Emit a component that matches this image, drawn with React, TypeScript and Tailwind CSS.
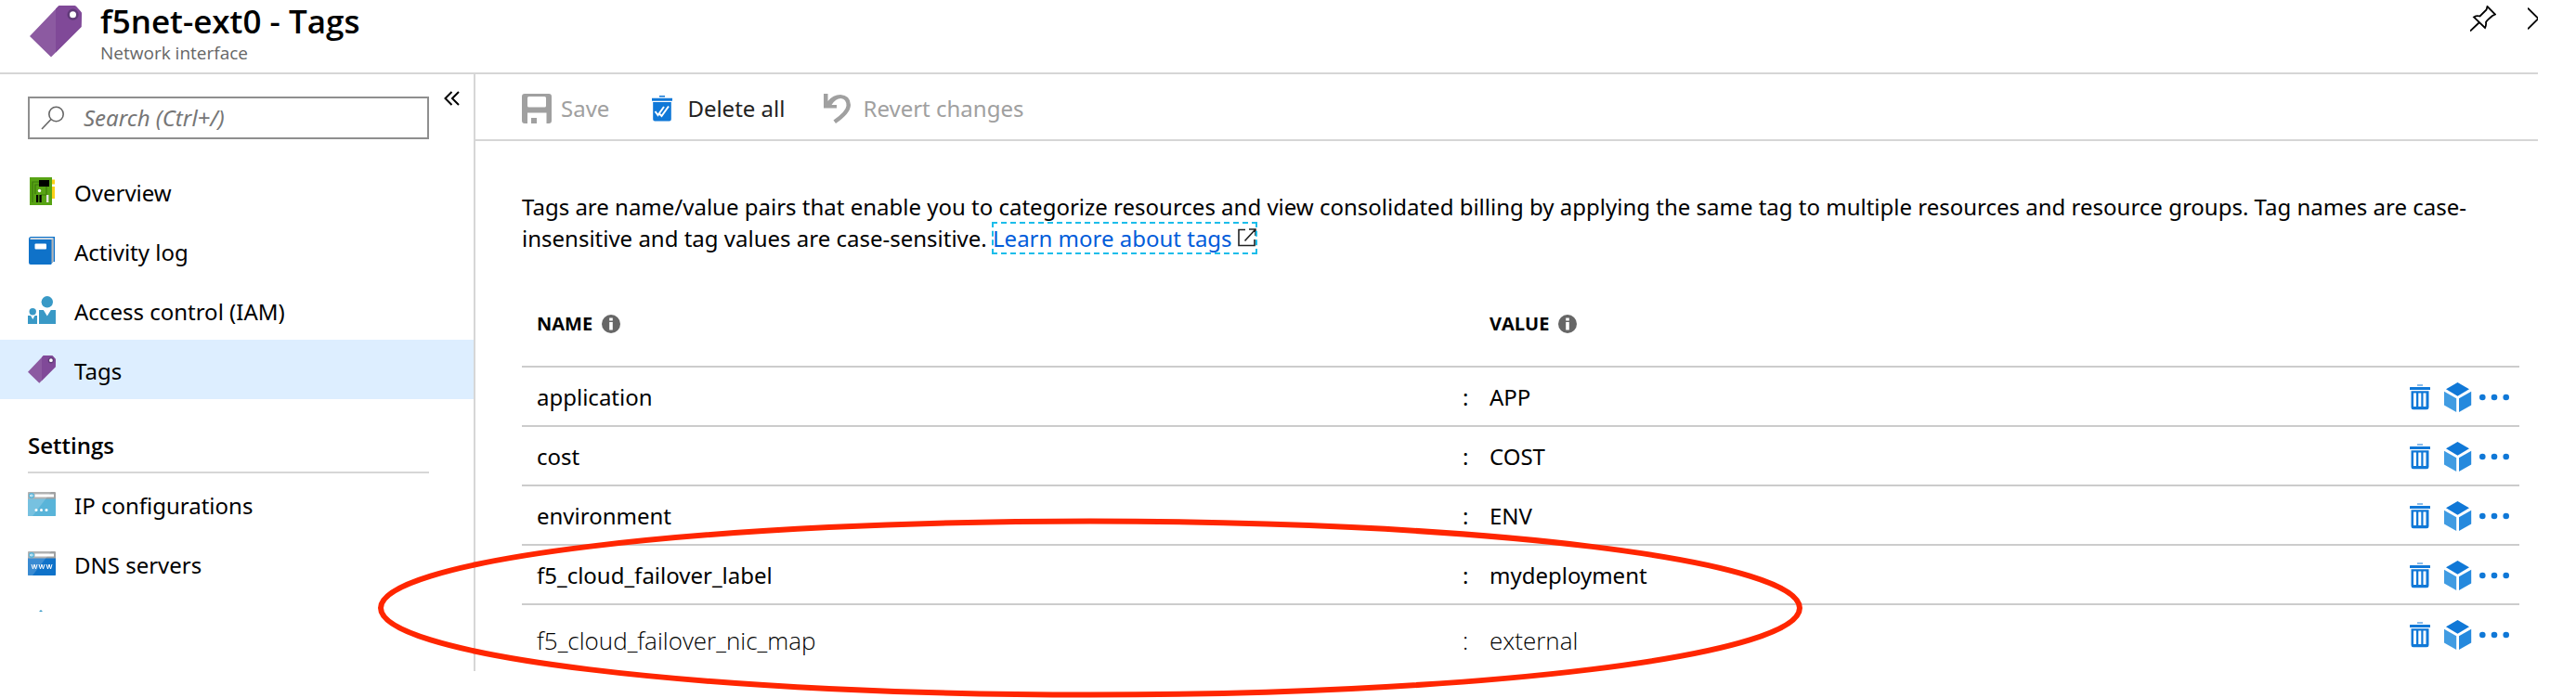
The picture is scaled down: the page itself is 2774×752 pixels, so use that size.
import React from "react";

function TagIcon({ className }: { className: string }) {
  return (
    <svg viewBox="0 0 56 56" className={className} aria-hidden="true">
      <path d="M0 33 31 .5Q31.500 0 32.500 0H47.500Q49 0 50 1L55 6.500Q56 7.500 56 9L55.500 23 23 55.500Z" fill="#8c5aa1" />
      <path d="M28 3.600 31 .5Q31.500 0 32.500 0H47.500Q49 0 50 1L55 6.500Q56 7.500 56 9L55.500 23 28 50.500Z" fill="#804998" />
      <circle cx="46.500" cy="9.700" r="4.800" fill="#fff" stroke="#603a78" strokeWidth="2.600" />
    </svg>
  );
}

function BoardIcon() {
  return (
    <svg viewBox="0 0 30 30" className="h-[30px] w-[30px]" aria-hidden="true">
      <path d="M26 2.500h3v5h-3zM26 10h3v13h-3z" fill="#fcd116" />
      <path d="M2 0h24v30H2z" fill="#57a314" />
      <path d="M12 5H5v22M12 8H8v10M20 10v9h-6" fill="none" stroke="#3d7a0d" strokeWidth="1.200" />
      <path d="M12 3h11v7H12zM9 19h2.200v8H9zM12.500 19h2.200v8h-2.200z" fill="#000" />
      <path d="M20 19h2.400v8H20z" fill="#e5e5e5" />
      <circle cx="12.500" cy="14.500" r="1.700" fill="#fff" />
    </svg>
  );
}

function BookIcon() {
  return (
    <svg viewBox="0 0 30 30" className="h-[30px] w-[30px]" aria-hidden="true">
      <path d="M3.500 0H29v27h-2l-2 3H3Q1 30 1 28V2.500Q1 0 3.500 0Z" fill="#0f72c9" />
      <path d="M3.500 1.200H27.500v25.500H26V3H3Q2 2.500 2.300 2 2.700 1.200 3.500 1.200Z" fill="#e6e6e6" />
      <path d="M26 2.500h1.300v24L25.500 29V3Z" fill="#b3b3b3" />
      <rect x="7.500" y="7.500" width="12.500" height="6" rx="1" fill="#fff" />
    </svg>
  );
}

function PeopleIcon() {
  return (
    <svg viewBox="0 0 30 30" className="h-[30px] w-[30px]" aria-hidden="true">
      <g fill="#3999c6">
        <circle cx="20.800" cy="6.300" r="6.200" />
        <path d="M12 15h4.800l4 6.500L24.800 15H30v15H12z" />
        <circle cx="5.200" cy="16.700" r="3.700" />
        <path d="M0 21h3l2.300 4L7.500 21H10v9H0z" />
      </g>
    </svg>
  );
}

function WindowIcon({ dns = false }: { dns?: boolean }) {
  return (
    <svg viewBox="0 0 30 26" className="h-[26px] w-[30px]" aria-hidden="true">
      <rect width="30" height="26" rx="1" fill="#a0a1a2" />
      <path d="M0 7.500h30V25q0 1-1 1H1q-1 0-1-1z" fill={dns ? "#0f72c9" : "#59b4d9"} />
      <path d="M1 0h24L5 26H1q-1 0-1-1V1q0-1 1-1z" fill="#fff" opacity=".18" />
      <path d="M7.500 2.500H28v3H7.500z" fill="#fff" />
      <circle cx="4" cy="4" r="3" fill="#59b4d9" />
      <path d="M6 4H2.500M4 2.500 2.500 4 4 5.500" fill="none" stroke="#fff" strokeWidth=".9" />
      {dns ? (
        <path
          d="m3 14 1.500 5 1.500-5 1.500 5L9 14M11 14l1.500 5 1.500-5 1.500 5 1.500-5M19 14l1.500 5 1.500-5 1.500 5 1.500-5"
          transform="translate(1 0)"
          fill="none"
          stroke="#fff"
          strokeWidth="1"
        />
      ) : (
        <g fill="#fff">
          <circle cx="9" cy="19.500" r="1.500" />
          <circle cx="14.500" cy="19.500" r="1.500" />
          <circle cx="20" cy="19.500" r="1.500" />
        </g>
      )}
    </svg>
  );
}

function SearchIcon() {
  return (
    <svg viewBox="0 0 26 26" className="h-[26px] w-[26px] shrink-0" aria-hidden="true">
      <g fill="none" stroke="#666" strokeWidth="1.600">
        <circle cx="16.500" cy="9" r="7.700" />
        <path d="M11 14.500 1 25" />
      </g>
    </svg>
  );
}

function SaveIcon() {
  return (
    <svg viewBox="0 0 32 32" className="h-8 w-8" aria-hidden="true">
      <path
        fillRule="evenodd"
        fill="#a0a0a0"
        d="M3 0h26q3 0 3 3v26q0 3-3 3h-2.500V20.500H6V32H3q-3 0-3-3V3q0-3 3-3Zm3 4.500V13q0 1.500 1.500 1.500h17Q26 14.500 26 13V4.500Q26 3 24.500 3h-17Q6 3 6 4.500ZM10 26h6v6h-6z"
      />
    </svg>
  );
}

function DeleteAllIcon() {
  return (
    <svg viewBox="0 0 22 28" className="h-7 w-[22px]" aria-hidden="true">
      <path d="M8 0h6v1.600H8zM0 2.800h22v3H0zM1.200 7h19.600v18.500q0 2-2 2H3.200q-2 0-2-2z" fill="#1078d7" />
      <path d="m3.500 17 3 4 6.500-9M8 19.500l2.500 2.500L18 11.500" fill="none" stroke="#fff" strokeWidth="2" />
    </svg>
  );
}

function RevertIcon() {
  return (
    <svg viewBox="0 0 30 32" className="h-8 w-[30px]" aria-hidden="true">
      <path d="M0 0V15.500H14V12H8.500Q13 5 18.500 5 24.500 5.500 24.500 13 24 19 10.500 28.500L13 32Q29 21 29 12 28.500 1.500 18 1 10 1 4.500 8V0Z" fill="#a0a0a0" />
    </svg>
  );
}

function PinIcon() {
  return (
    <svg viewBox="0 0 28 28" className="h-7 w-7" aria-hidden="true">
      <path
        d="M18.500 1 27 9.500 24 11Q18 16 17 18 17.500 21 16 24L4 12.500Q7 10.500 10.500 11.500L17.500 4.500ZM10 18 0 27.500"
        fill="none"
        stroke="#000"
        strokeWidth="1.800"
      />
    </svg>
  );
}

function InfoIcon() {
  return (
    <svg viewBox="0 0 20 20" className="h-5 w-5" aria-hidden="true">
      <circle cx="10" cy="10" r="10" fill="#666" />
      <path d="M8.200 3.500h3.600v3H8.200zM8.200 8h3.600v8.500H8.200z" fill="#fff" />
    </svg>
  );
}

function TrashIcon() {
  return (
    <svg viewBox="0 0 22 28" className="h-7 w-[22px]" aria-hidden="true">
      <path
        fillRule="evenodd"
        fill="#1078d7"
        d="M8 .4h6v1.200H8zM.5 3h21q.5 0 .5.500V6H0V3.500Q0 3 .5 3ZM1.500 7.200h19V25q0 2.300-2.300 2.300H3.800Q1.500 27.300 1.500 25ZM4 9.500v14.500h3V9.500Zm5.300 0v14.500h3V9.500Zm5.200 0v14.500h3V9.500Z"
      />
    </svg>
  );
}

function CubeIcon() {
  return (
    <svg viewBox="0 0 30 32" className="h-8 w-[30px]" aria-hidden="true">
      <path d="M14.500 0 27 7.300 14.500 14.800 2 7.300Z" fill="#1078d7" />
      <path d="M0 9.800 13.200 17.300V32L0 24.500Z" fill="#419ce2" />
      <path d="M29.200 9.800 16 17.300V32l13.200-7.500Z" fill="#2589dd" />
    </svg>
  );
}

function DotsIcon() {
  return (
    <svg viewBox="0 0 32 8" className="h-2 w-8" aria-hidden="true">
      <g fill="#1078d7">
        <circle cx="3.300" cy="4" r="3.300" />
        <circle cx="16" cy="4" r="3.300" />
        <circle cx="28.700" cy="4" r="3.300" />
      </g>
    </svg>
  );
}

const mainNav = [
  { label: "Overview", icon: <BoardIcon /> },
  { label: "Activity log", icon: <BookIcon /> },
  { label: "Access control (IAM)", icon: <PeopleIcon /> },
  { label: "Tags", icon: <TagIcon className="h-[30px] w-[30px]" />, active: true },
];

const settingsNav = [
  { label: "IP configurations", icon: <WindowIcon /> },
  { label: "DNS servers", icon: <WindowIcon dns /> },
];

const tags = [
  { name: "application", value: "APP" },
  { name: "cost", value: "COST" },
  { name: "environment", value: "ENV" },
  { name: "f5_cloud_failover_label", value: "mydeployment" },
  { name: "f5_cloud_failover_nic_map", value: "external", added: true },
];

function NavItem({ label, icon, active }: { label: string; icon: React.ReactNode; active?: boolean }) {
  return (
    <li>
      <a
        href="#"
        aria-current={active ? "page" : undefined}
        className={`flex h-16 items-center gap-5 pl-[30px] ${active ? "bg-[#ddeeff]" : ""}`}
      >
        {icon}
        <span className="pt-1">{label}</span>
      </a>
    </li>
  );
}

function Sidebar() {
  return (
    <nav className="w-[512px] shrink-0 border-r-2 border-[#d6d6d6] pt-6">
      <div className="flex items-start gap-4 pl-[30px]">
        <label className="flex h-[46px] w-[432px] items-center gap-5 border-2 border-[#8f8f8f] pl-3">
          <SearchIcon />
          <input
            type="text"
            aria-label="Search"
            placeholder="Search (Ctrl+/)"
            className="min-w-0 flex-1 italic outline-none placeholder:text-[#767676]"
          />
        </label>
        <button type="button" aria-label="Collapse menu" className="-mt-1.5">
          <svg viewBox="0 0 18 16" className="h-4 w-[18px]" aria-hidden="true">
            <path d="M8.500 1 1.500 8l7 7M16 1 9 8l7 7" fill="none" stroke="#000" strokeWidth="2" />
          </svg>
        </button>
      </div>
      <ul className="pt-6">
        {mainNav.map((item) => (
          <NavItem key={item.label} {...item} />
        ))}
      </ul>
      <h2 className="ml-[30px] mr-12 flex h-20 items-end border-b-2 border-[#d6d6d6] pb-3 font-['Open_Sans'] font-semibold">
        Settings
      </h2>
      <ul className="pt-px">
        {settingsNav.map((item) => (
          <NavItem key={item.label} {...item} />
        ))}
        <li className="h-[84px] pl-[42px] pt-[18px]">
          <svg viewBox="0 0 4 2" className="h-0.5 w-1" aria-hidden="true">
            <path d="M0 2 2 0l2 2z" fill="#3999c6" />
          </svg>
        </li>
      </ul>
    </nav>
  );
}

function Toolbar() {
  return (
    <div className="flex h-[72px] items-center border-b-2 border-[#d6d6d6] pl-[50px] pt-1">
      <button type="button" disabled className="flex items-center gap-2.5 text-[#a0a0a0]">
        <SaveIcon />
        Save
      </button>
      <button type="button" className="ml-[46px] flex items-center gap-4 text-[#222]">
        <DeleteAllIcon />
        Delete all
      </button>
      <button type="button" disabled className="ml-[42px] flex items-center gap-3 text-[#a0a0a0]">
        <RevertIcon />
        Revert changes
      </button>
    </div>
  );
}

function HeadCell({ label }: { label: string }) {
  return (
    <span className="flex items-center gap-2.5">
      {label}
      <InfoIcon />
    </span>
  );
}

function TagsTable() {
  return (
    <table className="w-full table-fixed text-left">
      <colgroup>
        <col className="w-[47%]" />
        <col className="w-[31px]" />
        <col />
        <col className="w-[118px]" />
      </colgroup>
      <thead>
        <tr className="font-['Open_Sans'] text-xl">
          <th className="h-[93px] pl-4 pt-0.5 font-bold">
            <HeadCell label="NAME" />
          </th>
          <th />
          <th className="pt-0.5 font-bold">
            <HeadCell label="VALUE" />
          </th>
          <th />
        </tr>
      </thead>
      <tbody>
        {tags.map((tag) => (
          <tr
            key={tag.name}
            className={`border-t-2 border-[#cccccc] ${
              tag.added ? "h-[76px] font-['Open_Sans'] text-[26px] font-light text-black" : "h-16"
            }`}
          >
            <td className="pl-4 pt-0.5">{tag.name}</td>
            <td className="pl-0.5 pt-0.5">:</td>
            <td className="pt-0.5">{tag.value}</td>
            <td className="align-top">
              <div className="flex h-[62px] items-center pt-px">
                <button type="button" aria-label="Delete tag">
                  <TrashIcon />
                </button>
                <button type="button" aria-label="Show resources" className="ml-[15px]">
                  <CubeIcon />
                </button>
                <button type="button" aria-label="More options" className="ml-2">
                  <DotsIcon />
                </button>
              </div>
            </td>
          </tr>
        ))}
      </tbody>
    </table>
  );
}

export default function App() {
  return (
    <div className="relative min-h-screen overflow-hidden bg-white pr-[41px] font-['Noto_Sans','Open_Sans',sans-serif] text-2xl text-black">
      <header className="flex h-20 items-start border-b-2 border-[#d6d6d6] pl-8">
        <TagIcon className="mt-1.5 h-14 w-14" />
        <div className="ml-5">
          <h1 className="font-['Open_Sans'] text-[35px] font-semibold leading-[45px]">f5net-ext0 - Tags</h1>
          <p className="font-['Open_Sans'] text-[19px] leading-[24px] text-[#666]">Network interface</p>
        </div>
        <div className="ml-auto mt-1.5 flex items-start gap-[34px]">
          <button type="button" aria-label="Pin">
            <PinIcon />
          </button>
          <button type="button" aria-label="Close" className="mt-0.5 w-[11px] overflow-hidden">
            <svg viewBox="0 0 11 24" className="h-6 w-[11px]" aria-hidden="true">
              <path d="M0 .7 11.500 12 0 23.300" fill="none" stroke="#000" strokeWidth="1.800" />
            </svg>
          </button>
        </div>
      </header>
      <div className="flex items-start">
        <Sidebar />
        <main className="min-w-0 flex-1">
          <Toolbar />
          <div className="pl-[50px] pr-5 pt-[54px]">
            <p className="leading-[34px]">
              Tags are name/value pairs that enable you to categorize resources and view consolidated billing by
              applying the same tag to multiple resources and resource groups. Tag names are case-insensitive and tag
              values are case-sensitive.{" "}
              <a href="#" className="text-[#015cda] outline-2 -outline-offset-1 outline-dashed outline-[#1bbdea]">
                Learn more about tags
                <svg viewBox="0 0 20 20" className="ml-1.5 inline h-5 w-5 align-baseline" aria-hidden="true">
                  <path d="M8 1.500H1v17h17V12M12 1h7v7M19 1 7.500 13.500" fill="none" stroke="#222" strokeWidth="1.600" />
                </svg>
              </a>
            </p>
            <div className="pt-7">
              <TagsTable />
            </div>
          </div>
        </main>
      </div>
      <svg
        viewBox="0 0 1536 194"
        className="pointer-events-none absolute left-[406px] top-[558px] h-[194px] w-[1536px]"
        aria-hidden="true"
      >
        <ellipse cx="768" cy="97" rx="764" ry="93.500" fill="none" stroke="#ff2600" strokeWidth="6" />
      </svg>
    </div>
  );
}
